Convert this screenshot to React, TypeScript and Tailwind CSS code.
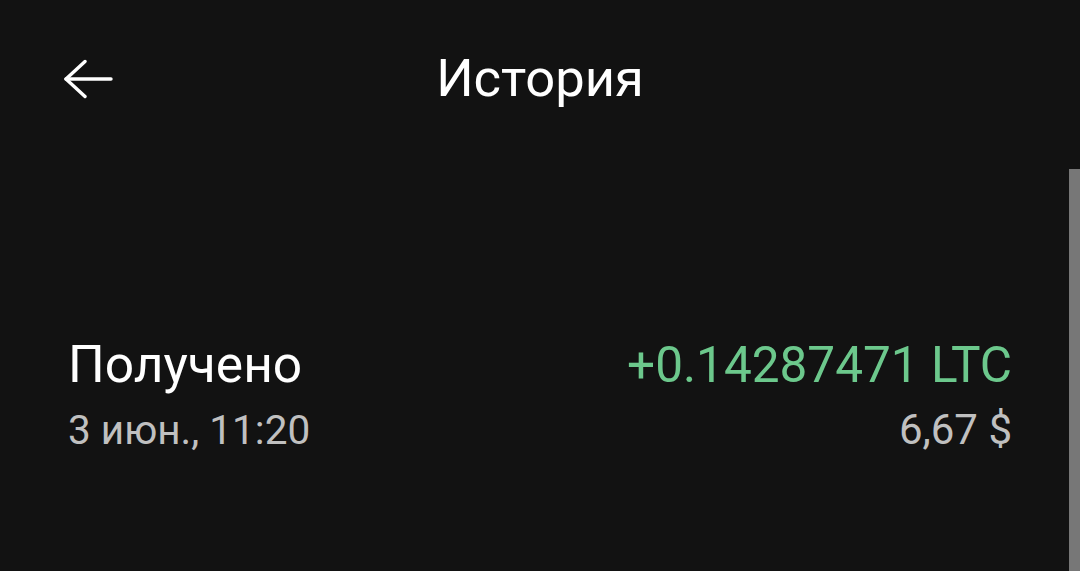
function BackArrow() {
  return (
    <svg width="50" height="42" viewBox="0 0 50 42" fill="none" stroke="currentColor" strokeWidth={3.4} strokeLinecap="round" strokeLinejoin="round">
      <path d="M2 21H47" />
      <path d="M21 3.5L2 21L21 38.5" />
    </svg>
  );
}

export default function App() {
  return (
    <div
      className="relative h-[571px] w-[1080px] overflow-hidden bg-[#121212] text-white"
      style={{ fontFamily: "Roboto, 'Noto Sans', sans-serif" }}
    >
      {/* Header */}
      <header className="relative flex h-[158px] items-start pt-[58px]">
        <button className="ml-[64px] flex text-white">
          <BackArrow />
        </button>
        <h1 className="absolute left-0 right-0 top-[45px] text-center text-[52.5px] leading-[66px] font-normal">
          История
        </h1>
      </header>

      {/* Scrollbar */}
      <div className="absolute right-0 top-[169px] bottom-0 w-[11px] bg-[#777777]" />

      {/* Transaction */}
      <div className="mt-[176px] flex justify-between pl-[68px] pr-[68px]">
        <div className="flex flex-col">
          <span className="text-[51.5px] leading-[62px]">Получено</span>
          <span className="mt-[6px] text-[40.5px] leading-[56px] text-[#c0c0c0]">3 июн., 11:20</span>
        </div>
        <div className="flex flex-col items-end">
          <span className="text-[49.5px] leading-[62px] text-[#6cc88c]">+0.14287471 LTC</span>
          <span className="mt-[6px] text-[42px] leading-[56px] text-[#c0c0c0]">6,67 $</span>
        </div>
      </div>
    </div>
  );
}
